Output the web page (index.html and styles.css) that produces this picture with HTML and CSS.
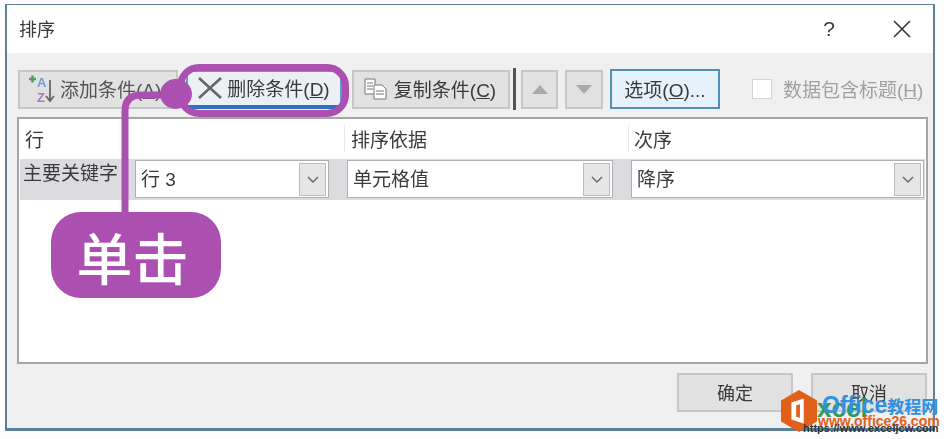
FILE: index.html
```html
<!DOCTYPE html>
<html lang="zh-CN">
<head>
    <meta charset="UTF-8">
    <title>排序</title>
    <link rel="stylesheet" href="styles.css">
</head>
<body>
    <div class="dialog">
        <div class="titlebar">
            <span class="title">排序</span>
            <span class="help">?</span>
            <svg class="close" width="18" height="18" viewBox="0 0 18 18"><path d="M1 1L17 17M17 1L1 17" stroke="#333" stroke-width="1.6" fill="none"/></svg>
        </div>

        <div class="content">
            <div class="toolbar">
                <button class="btn btn-add">
                    <svg width="30" height="32" viewBox="0 0 30 32">
                        <path d="M1 6H8M4.500 2.500V9.500" stroke="#4f9a6e" stroke-width="2.400" fill="none"/>
                        <text x="9" y="14" class="az az-a">A</text>
                        <text x="9" y="29" class="az az-z">Z</text>
                        <path d="M22 7V27M18 23L22 28L26 23" stroke="#666" stroke-width="1.800" fill="none"/>
                    </svg>
                    <span>添加条件(<u>A</u>)</span>
                </button>
                <button class="btn btn-del">
                    <svg width="24" height="22" viewBox="0 0 24 22"><path d="M1 1L23 21M23 1L1 21" stroke="#666" stroke-width="2.600" fill="none"/></svg>
                    <span>删除条件(<u>D</u>)</span>
                </button>
                <button class="btn btn-copy">
                    <svg width="26" height="24" viewBox="0 0 26 24">
                        <path d="M2 2H12V17H2ZM4 6H10M4 9H10M4 12H10" stroke="#777" stroke-width="1" fill="#fff"/>
                        <path d="M11 8H19L23 12V22H11ZM13 14H21M13 17H21" stroke="#777" stroke-width="1" fill="#fff"/>
                    </svg>
                    <span>复制条件(<u>C</u>)</span>
                </button>
                <div class="sep"></div>
                <button class="btn btn-arrow"><svg width="16" height="9" viewBox="0 0 16 9"><path d="M8 0L16 9H0Z" fill="#aaa"/></svg></button>
                <button class="btn btn-arrow"><svg width="16" height="9" viewBox="0 0 16 9"><path d="M0 0H16L8 9Z" fill="#aaa"/></svg></button>
                <button class="btn btn-options"><span>选项(<u>O</u>)...</span></button>
                <label class="check"><span class="box"></span><span>数据包含标题(<u>H</u>)</span></label>
            </div>

            <div class="grid">
                <div class="grid-head">
                    <div class="col-a">行</div>
                    <div class="col-b">排序依据</div>
                    <div class="col-c">次序</div>
                </div>
                <div class="grid-row">
                    <div class="col-a row-name">
                        <span class="key">主要关键字</span>
                        <div class="select"><span>行 3</span><i class="drop"><svg width="12" height="7" viewBox="0 0 12 7"><path d="M1 1L6 6L11 1" stroke="#666" stroke-width="1.400" fill="none"/></svg></i></div>
                    </div>
                    <div class="col-b">
                        <div class="select"><span>单元格值</span><i class="drop"><svg width="12" height="7" viewBox="0 0 12 7"><path d="M1 1L6 6L11 1" stroke="#666" stroke-width="1.400" fill="none"/></svg></i></div>
                    </div>
                    <div class="col-c">
                        <div class="select"><span>降序</span><i class="drop"><svg width="12" height="7" viewBox="0 0 12 7"><path d="M1 1L6 6L11 1" stroke="#666" stroke-width="1.400" fill="none"/></svg></i></div>
                    </div>
                </div>
            </div>

            <div class="actions">
                <button class="btn btn-foot"><span>确定</span></button>
                <button class="btn btn-foot"><span>取消</span></button>
            </div>
        </div>
    </div>

    <!-- 紫色标注 -->
    <div class="ring"></div>
    <svg class="leader" width="80" height="150" viewBox="0 0 80 150"><path d="M4 148V45Q4 29 20 29H60" stroke="#ab4fb0" stroke-width="7" fill="none"/></svg>
    <div class="dot"></div>
    <div class="bubble">单击</div>

    <!-- 水印 -->
    <div class="mark">
        <svg class="mark-logo" width="36" height="42" viewBox="0 0 38 44" preserveAspectRatio="none">
            <path d="M19 0L38 11V33L19 44L0 33V11Z" fill="#e2601a"/>
            <path d="M11 13L24 9V35L11 31ZM16 16V28L20 29V15Z" fill="#fff"/>
        </svg>
        <span class="mark-xcel">xcel</span>
        <span class="mark-name">Office<span class="mark-cn">教程网</span></span>
        <span class="mark-url">www.office26.com</span>
        <span class="mark-url2">https://www.exceljcw.com</span>
    </div>
</body>
</html>
```

FILE: styles.css
```css
* {
    box-sizing: border-box;
}
body {
    margin: 0;
    width: 944px;
    height: 439px;
    overflow: hidden;
    position: relative;
    background-color: #fdfdfd;
    font-family: "Liberation Sans", "Noto Sans CJK SC", sans-serif;
    font-size: 19px;
    color: #3a3a3a;
}
.dialog {
    position: absolute;
    left: 5px;
    top: 4px;
    width: 930px;
    height: 427px;
    display: flex;
    flex-direction: column;
    border: 2px solid #5c8199;
    border-bottom-width: 3px;
    border-top-width: 1px;
    background-color: #f0f0f0;
    filter: blur(0.5px);
}
.titlebar {
    height: 48px;
    flex: none;
    display: flex;
    align-items: center;
    padding: 0 14px 0 12px;
    background-color: #fff;
}
.title {
    flex: 1;
    font-size: 18px;
    margin-top: -2px;
}
.help {
    font-size: 21px;
    margin-right: 58px;
}
.close {
    margin-right: 8px;
}
.content {
    flex: 1;
    padding: 16px 5px 0 11px;
    display: flex;
    flex-direction: column;
}
.toolbar {
    display: flex;
    align-items: center;
    height: 40px;
}
.btn {
    height: 39px;
    padding: 0;
    display: flex;
    align-items: center;
    justify-content: center;
    background-color: #e1e1e1;
    border: 2px solid #c6c6c6;
    font: inherit;
    color: inherit;
}
.btn span {
    margin-top: -2px;
}
.btn-add {
    width: 160px;
    margin-right: 8px;
    justify-content: flex-start;
    padding-left: 8px;
    gap: 2px;
    color: #555;
}
.btn-del {
    width: 156px;
    margin-right: 10px;
    gap: 5px;
    background-color: #ecf0f5;
    border-color: #5a9bd8;
    border-bottom: 4px solid #2f72c4;
}
.btn-copy {
    width: 158px;
    margin-right: 3px;
    padding-right: 3px;
    gap: 5px;
}
.az {
    font-size: 13px;
    font-weight: bold;
}
.az-a {
    fill: #6d9fd0;
}
.az-z {
    fill: #a678c8;
}
.sep {
    width: 3px;
    height: 42px;
    background-color: #555;
    margin-right: 5px;
}
.btn-arrow {
    width: 37px;
    margin-right: 7px;
}
.btn-arrow + .btn-arrow {
    width: 38px;
}
.btn-options {
    width: 110px;
    height: 40px;
    background-color: #e5f1fb;
    border-color: #4f8fb8;
    margin-right: 32px;
}
.check {
    display: flex;
    align-items: center;
    gap: 11px;
    color: #a0a0a0;
    white-space: nowrap;
}
.check span + span {
    margin-top: -2px;
}
.box {
    width: 20px;
    height: 20px;
    background-color: #fff;
    border: 1px solid #d5d5d5;
}
.grid {
    height: 247px;
    margin: 8px 0 0 -1px;
    background-color: #fff;
    border: 2px solid #a5a5a5;
}
.grid-head {
    display: flex;
    height: 40px;
    align-items: center;
    padding-bottom: 2px;
    margin: 0 1px;
}
.grid-row {
    display: flex;
    height: 41px;
    margin: 0 1px;
    background-color: #dcdce0;
}
.col-a {
    width: 324px;
    flex: none;
    padding-left: 5px;
}
.col-b {
    width: 284px;
    flex: none;
    padding-left: 6px;
    border-left: 1px solid #e8e8e8;
}
.col-c {
    flex: 1;
    padding-left: 5px;
    border-left: 1px solid #e8e8e8;
}
.grid-row .col-b,
.grid-row .col-c {
    border-left: none;
    padding: 1px 15px 0 3px;
}
.grid-row .col-c {
    padding-right: 1px;
}
.row-name {
    display: flex;
    padding: 1px 15px 0 3px;
}
.key {
    width: 112px;
    flex: none;
    margin-top: -2px;
    white-space: nowrap;
}
.select {
    height: 38px;
    flex: 1;
    display: flex;
    align-items: center;
    justify-content: space-between;
    padding: 0 2px 0 5px;
    background-color: #fff;
    border: 1px solid #b0b0b0;
}
.select span {
    margin-top: -3px;
}
.drop {
    width: 27px;
    height: 33px;
    display: flex;
    align-items: center;
    justify-content: center;
    background-color: #e6e6e6;
    border: 1px solid #bdbdbd;
}
.actions {
    display: flex;
    justify-content: flex-end;
    gap: 18px;
    margin-top: 9px;
    padding-right: 1px;
}
.btn-foot {
    width: 116px;
    height: 39px;
    font-size: 18px;
}

/* 紫色标注 */
.ring {
    position: absolute;
    left: 177px;
    top: 64px;
    width: 172px;
    height: 53px;
    border: 7px solid #ab4fb0;
    border-radius: 22px;
}
.leader {
    position: absolute;
    left: 121px;
    top: 66px;
}
.dot {
    position: absolute;
    left: 160px;
    top: 79px;
    width: 32px;
    height: 30px;
    border-radius: 50%;
    background-color: #ab4fb0;
}
.bubble {
    position: absolute;
    left: 51px;
    top: 212px;
    width: 170px;
    height: 86px;
    display: flex;
    align-items: center;
    justify-content: center;
    padding-right: 7px;
    border-radius: 30px;
    background-color: #ab4fb0;
    color: #fff;
    font-size: 56px;
    font-weight: 500;
}

/* 水印 */
.mark {
    position: absolute;
    left: 0;
    top: 0;
    width: 944px;
    height: 439px;
    pointer-events: none;
}
.mark-logo {
    position: absolute;
    left: 781px;
    top: 390px;
}
.mark-xcel {
    position: absolute;
    left: 817px;
    top: 393px;
    font-size: 26px;
    font-weight: bold;
    color: #2f9a5a;
}
.mark-name {
    position: absolute;
    left: 822px;
    top: 392px;
    font-size: 23px;
    font-weight: bold;
    color: #2f8fe0;
    white-space: nowrap;
}
.mark-cn {
    font-size: 17px;
}
.mark-url {
    position: absolute;
    left: 818px;
    top: 413px;
    font-size: 14px;
    font-weight: bold;
    color: #e2601a;
    white-space: nowrap;
}
.mark-url2 {
    position: absolute;
    left: 803px;
    top: 422px;
    font-size: 11px;
    font-weight: bold;
    color: #333;
    white-space: nowrap;
}
```
